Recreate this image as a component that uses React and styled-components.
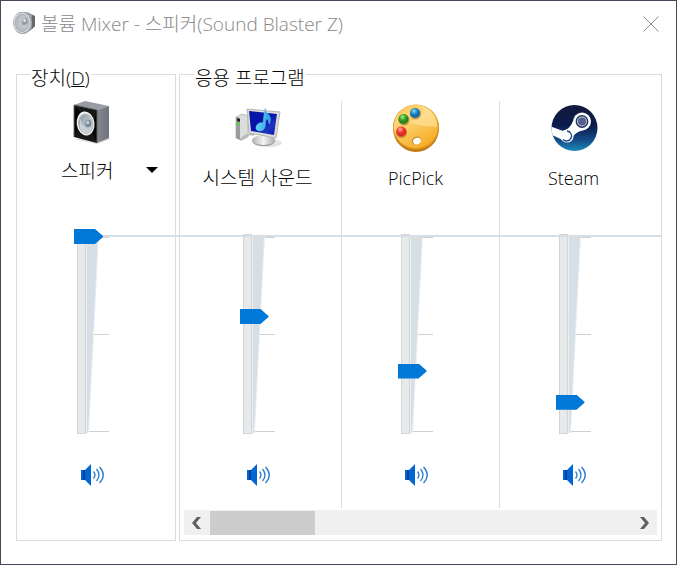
import React from 'react'
import styled, { createGlobalStyle } from 'styled-components'

const GlobalStyle = createGlobalStyle`
  * {
    box-sizing: border-box;
  }

  body {
    margin: 0;
    background: white;
    color: black;
    font-family: 'Open Sans', 'Noto Sans CJK KR', sans-serif;
    font-size: 18px;
    font-weight: 300;
  }
`

const Window = styled.main`
  display: flex;
  flex-direction: column;
  border: 1px solid #454a59;
  background: white;
`

const TitleBar = styled.header`
  display: flex;
  align-items: center;
  height: 46px;
  padding: 0 12px 0 11px;
`

const Title = styled.h1`
  flex: 1;
  margin: 0 0 0 4px;
  color: #888;
  font-size: 19px;
  font-weight: 300;
  line-height: 24px;
  white-space: nowrap;
`

const IconButton = styled.button`
  display: flex;
  align-items: center;
  justify-content: center;
  width: 26px;
  height: 24px;
  padding: 0;
  border: 0;
  background: transparent;
  cursor: pointer;
`

const Groups = styled.div`
  position: relative;
  display: flex;
  gap: 3px;
  padding: 12px 14px 23px 15px;
`

const Group = styled.fieldset`
  flex: ${props => (props.$fixed ? '0 0 160px' : '1 1 0')};
  min-width: 0;
  margin: 0;
  padding: ${props => (props.$fixed ? '0' : '0 4px 5px')};
  border: 1px solid #dcdcdc;
`

const Legend = styled.legend`
  margin-left: ${props => (props.$indent ? '10px' : '13px')};
  padding: 8px 1px 0;
  font-size: 19px;
  line-height: 22px;
`

const LevelLine = styled.div`
  position: absolute;
  top: 188px;
  left: 86px;
  right: 14px;
  height: 2px;
  background: #d6dfe6;
`

const Columns = styled.div`
  display: flex;
  margin: 12px 0 2px;
`

const Column = styled.div`
  flex: 1 1 0;
  display: flex;
  flex-direction: column;
  align-items: center;
  min-width: 0;
  padding: 0 ${props => (props.$master ? '8px' : '10px')} 22px 0;

  & + & {
    border-left: 1px solid #d6dfe6;
  }
`

const Head = styled.div`
  display: flex;
  flex-direction: column;
  align-items: center;
  gap: 14px;
  width: 100%;
  height: 128px;
  padding-top: ${props => (props.$top ? '0' : '3px')};
`

const Label = styled.label`
  font-size: ${props => (props.$latin ? '18px' : '19px')};
  line-height: 24px;
  white-space: nowrap;
`

const Picker = styled.div`
  position: relative;
  width: 100%;

  svg {
    position: absolute;
    top: 8px;
    right: 9px;
    pointer-events: none;
  }
`

const Select = styled.select`
  appearance: none;
  display: block;
  width: 100%;
  height: 24px;
  padding: 0 0 0 44px;
  border: 0;
  background: transparent;
  color: black;
  font-family: inherit;
  font-size: 19px;
  font-weight: 300;
  line-height: 24px;
`

const Fader = styled.div`
  position: relative;
  width: 36px;
  height: 210px;
`

const Scale = styled.svg`
  display: block;
`

const Range = styled.input`
  appearance: none;
  position: absolute;
  top: 0;
  left: 0;
  z-index: 1;
  width: 29px;
  height: 210px;
  margin: 0;
  background: transparent;
  writing-mode: vertical-lr;
  direction: rtl;
  cursor: pointer;

  &::-webkit-slider-runnable-track {
    width: 29px;
    background: transparent;
  }

  &::-webkit-slider-thumb {
    appearance: none;
    width: 29px;
    height: 15px;
    border: 0;
    background: #0078d7;
    clip-path: polygon(0 0, 21px 0, 29px 7px, 29px 8px, 21px 15px, 0 15px);
  }
`

const MuteButton = styled(IconButton)`
  height: 22px;
  margin: 25px 0 0 2px;
`

const ScrollBar = styled.div`
  display: flex;
  align-items: center;
  height: 25px;
  background: #f0f0f0;
`

const ScrollTrack = styled.div`
  flex: 1;
  height: 24px;
`

const ScrollThumb = styled.div`
  width: 25%;
  height: 24px;
  background: #cdcdcd;
`

const VolumeIcon = () => (
  <svg width="25" height="25" viewBox="0 0 25 25">
    <defs>
      <radialGradient id="cone" cx="0.6" cy="0.5">
        <stop offset="0" stopColor="#8c9399" />
        <stop offset="0.4" stopColor="#c2c9cf" />
        <stop offset="1" stopColor="#b4bac0" />
      </radialGradient>
    </defs>
    <g transform="translate(0 -2)">
      <path d="M12 1 19 4 23 6V16L19 20 12 24Z" fill="#8d8f92" />
      <path d="M20 5 23 6 23 16 20 19Z" fill="#66696c" />
      <path d="M18 5V19" stroke="#c4c7ca" />
      <ellipse cx="10.5" cy="12.8" rx="9.5" ry="11.2" fill="#9da1a4" />
      <ellipse cx="10" cy="12.8" rx="8.6" ry="10.2" fill="#dfe2e4" />
      <ellipse cx="10" cy="12.8" rx="7" ry="8.8" fill="url(#cone)" stroke="#a9aeb3" />
      <ellipse cx="13" cy="11.5" rx="2.5" ry="3.2" fill="#929aa1" />
      <ellipse cx="12.5" cy="10.5" rx="1.2" ry="1.7" fill="#e3e9ee" />
    </g>
  </svg>
)

const CloseIcon = () => (
  <svg width="16" height="16" viewBox="0 0 16 16">
    <path d="M.5.5 15.5 15.5M15.5.5.5 15.5" stroke="#8c8c8c" fill="none" />
  </svg>
)

const DeviceIcon = () => (
  <svg width="38" height="44" viewBox="0 0 38 44">
    <defs>
      <linearGradient id="boxSide" x1="0" x2="1">
        <stop offset="0" stopColor="#858890" />
        <stop offset="1" stopColor="#6f727b" />
      </linearGradient>
      <linearGradient id="coneFill" x1="0" y1="0" x2="1" y2="1">
        <stop offset="0" stopColor="#8d979e" />
        <stop offset="1" stopColor="#d4e0e7" />
      </linearGradient>
    </defs>
    <path d="M1 38 24 43 38 38 34 36Z" fill="#ddd" />
    <path d="M1 4 12 0 36 5 24 9Z" fill="#9a9ca3" />
    <path d="M24 9 36 5V37L24 42Z" fill="url(#boxSide)" />
    <path d="M1 4 24 9V42L1 36Z" fill="#171717" />
    <path d="M2 6 11 14 2 34ZM23 39 18 31 23 12Z" fill="#050505" />
    <path d="M1 36V4L24 9V42" fill="none" stroke="#58595c" strokeWidth="0.8" />
    <ellipse cx="12.6" cy="22.5" rx="8.9" ry="12" transform="rotate(-8 12.6 22.5)" fill="#f2f3f3" />
    <ellipse cx="12.8" cy="22.7" rx="7.2" ry="9.8" transform="rotate(-8 12.8 22.7)" fill="url(#coneFill)" stroke="#b5babd" />
    <path d="M7 17Q9 27 18 30Q12 35 7 27Z" fill="#c9d2d8" />
    <ellipse cx="15.3" cy="22.5" rx="3" ry="3.8" fill="#76858e" />
    <ellipse cx="14.8" cy="21.5" rx="1.6" ry="2" fill="#bccbd4" />
  </svg>
)

const ComputerIcon = () => (
  <svg width="48" height="48" viewBox="0 0 48 48">
    <defs>
      <linearGradient id="screen" x1="0" x2="1" y2="1">
        <stop offset="0" stopColor="#0718a2" />
        <stop offset="0.5" stopColor="#0713ad" />
        <stop offset="0.7" stopColor="#1c34c0" />
        <stop offset="1" stopColor="#0c1aa8" />
      </linearGradient>
      <linearGradient id="stand" x1="0" x2="1">
        <stop offset="0" stopColor="#b1b3b4" />
        <stop offset="0.5" stopColor="#f4f4f4" />
        <stop offset="1" stopColor="#a8aaab" />
      </linearGradient>
      <linearGradient id="note" x1="0" x2="1">
        <stop offset="0" stopColor="#64d2f8" />
        <stop offset="1" stopColor="#259fde" />
      </linearGradient>
    </defs>
    <ellipse cx="36" cy="39" rx="12" ry="4" fill="#e4e4e4" />
    <path d="M2 13 8 10 14 12V33L8 36 2 34Z" fill="#dcdddd" stroke="#b0b1b1" strokeWidth="0.8" />
    <path d="M2 13 6 14V36L2 34Z" fill="#9b9d9d" />
    <path d="M3 14 6 15V18L3 17Z" fill="#222" />
    <path d="M3 18 6 19V21L3 20Z" fill="#39e31c" />
    <path d="M6 36Q15 28 20 31" fill="none" stroke="#b6b6b6" strokeWidth="2" />
    <path d="M28 29 38 31 37 37H27Z" fill="#b6b8b9" />
    <ellipse cx="29.5" cy="37" rx="11.5" ry="5.2" fill="#9fa1a2" />
    <ellipse cx="29.5" cy="36.2" rx="11.5" ry="4.8" fill="url(#stand)" />
    <path d="M13 5 46 8 42 34 15 29Z" fill="#deddda" stroke="#b8b6b2" />
    <path d="M15 7 43 10 40 31 17 27Z" fill="url(#screen)" />
    <path d="M31 4C32 10 38 11 36 18L35 20C35 16 33 15 32 15L31 23C30 28 22 28 22 24C22 20 26 18 29 19Z" fill="url(#note)" stroke="#75d1f3" strokeWidth="0.5" />
  </svg>
)

const PaletteIcon = () => (
  <svg width="48" height="48" viewBox="0 0 48 48">
    <defs>
      <linearGradient id="wood" x1="0" y1="0" x2="0.6" y2="1">
        <stop offset="0" stopColor="#ffc65a" />
        <stop offset="0.4" stopColor="#ffd475" />
        <stop offset="1" stopColor="#f6ad28" />
      </linearGradient>
      <radialGradient id="red" cx="0.4" cy="0.3">
        <stop offset="0" stopColor="#ffaaa1" />
        <stop offset="0.6" stopColor="#f44239" />
        <stop offset="1" stopColor="#d92b24" />
      </radialGradient>
      <radialGradient id="green" cx="0.4" cy="0.3">
        <stop offset="0" stopColor="#b4eb91" />
        <stop offset="0.6" stopColor="#39a72b" />
        <stop offset="1" stopColor="#278319" />
      </radialGradient>
      <radialGradient id="blue" cx="0.4" cy="0.3">
        <stop offset="0" stopColor="#94ddf6" />
        <stop offset="0.6" stopColor="#238ac7" />
        <stop offset="1" stopColor="#126aa4" />
      </radialGradient>
    </defs>
    <ellipse cx="24" cy="24.5" rx="23" ry="23.5" fill="#c17a14" />
    <ellipse cx="24" cy="23" rx="23" ry="22.5" fill="#e39a22" />
    <ellipse cx="23.8" cy="22.4" rx="22" ry="21.6" fill="url(#wood)" />
    <path d="M17 18Q25 22 45 23Q44 5 27 1Q39 9 17 18Z" fill="#ffe39e" opacity="0.65" />
    <circle cx="23.5" cy="10" r="5.6" fill="#91651f" opacity="0.5" />
    <circle cx="12" cy="16" r="5.6" fill="#75651f" opacity="0.5" />
    <circle cx="9.5" cy="28.5" r="5.6" fill="#91521f" opacity="0.5" />
    <circle cx="23" cy="9" r="5" fill="url(#blue)" />
    <circle cx="11.5" cy="15" r="5" fill="url(#green)" />
    <circle cx="9.2" cy="27.5" r="5" fill="url(#red)" />
    <ellipse cx="24.5" cy="36.5" rx="4.7" ry="3.9" transform="rotate(-25 24.5 36.5)" fill="#c68223" />
    <ellipse cx="25" cy="37" rx="4" ry="3.3" transform="rotate(-25 25 37)" fill="white" />
  </svg>
)

const SteamIcon = () => (
  <svg width="48" height="48" viewBox="0 0 48 48">
    <defs>
      <linearGradient id="steamFill" x1="0" y1="0" x2="0" y2="1">
        <stop offset="0" stopColor="#121a3b" />
        <stop offset="0.45" stopColor="#0c1b4e" />
        <stop offset="0.75" stopColor="#134a83" />
        <stop offset="1" stopColor="#1c8abb" />
      </linearGradient>
      <clipPath id="steamClip">
        <circle cx="24.5" cy="24" r="23" />
      </clipPath>
    </defs>
    <circle cx="24.5" cy="24" r="23" fill="url(#steamFill)" />
    <g clipPath="url(#steamClip)">
      <path d="M0 22 13 27Q20 25 23 17L34 26Q25 28 22 34L17 38 0 30Z" fill="white" />
      <circle cx="17" cy="32" r="6.6" fill="white" />
      <circle cx="32" cy="17.5" r="9" fill="white" />
    </g>
    <circle cx="32" cy="17.5" r="5.7" fill="#c3cadb" stroke="#22335f" strokeWidth="1.4" />
    <circle cx="32" cy="17.5" r="4" fill="#53618a" />
    <path d="M13 35.5A5 5 0 1 0 17 27" fill="none" stroke="#17457d" strokeWidth="1.3" />
  </svg>
)

const MuteIcon = () => (
  <svg width="24" height="22" viewBox="0 0 24 22">
    <path d="M0 6H4L10 0V22L4 16H0Z" fill="#0066d4" />
    <path d="M2 6H4V16H2Z" fill="#003f96" />
    <path
      d="M12.5 7.5Q15.5 11 12.5 14.5M15.5 5Q20.5 11 15.5 17M18.5 3Q26 11 18.5 19"
      fill="none"
      stroke="#2a7bd0"
      strokeWidth="1.3"
    />
  </svg>
)

const Chevron = ({ d }) => (
  <svg width="10" height="12" viewBox="0 0 10 12">
    <path d={d} fill="#606060" />
  </svg>
)

const VolumeFader = ({ id, value }) => (
  <Fader>
    <Scale width="36" height="210" viewBox="0 0 36 210">
      <path d="M12 8.5H35M12 105.5H35M12 202.5H35" stroke="#d0d0d0" />
      <path d="M12 7H25L15 204H12Z" fill="#ebeff2" />
      <path d="M13 7H24L14 204H13Z" fill="#d6dfe6" />
      <rect x="3.5" y="5.5" width="8" height="199" fill="#e7eaea" stroke="#d3d5d5" />
    </Scale>
    <Range id={id} type="range" min="0" max="100" defaultValue={value} aria-label="볼륨" />
  </Fader>
)

const Mute = () => (
  <MuteButton type="button" aria-label="음소거">
    <MuteIcon />
  </MuteButton>
)

const apps = [
  { id: 'system', name: '시스템 사운드', Icon: ComputerIcon, volume: 59 },
  { id: 'picpick', name: 'PicPick', Icon: PaletteIcon, volume: 31, latin: true },
  { id: 'steam', name: 'Steam', Icon: SteamIcon, volume: 15, latin: true },
]

const App = () => (
  <>
    <GlobalStyle />
    <Window>
      <TitleBar>
        <VolumeIcon />
        <Title>볼륨 Mixer - 스피커(Sound Blaster Z)</Title>
        <IconButton type="button" aria-label="닫기">
          <CloseIcon />
        </IconButton>
      </TitleBar>

      <Groups>
        <Group $fixed>
          <Legend>
            <label htmlFor="device">장치(<u>D</u>)</label>
          </Legend>
          <Columns>
            <Column $master>
              <Head $top>
                <DeviceIcon />
                <Picker>
                  <Select id="device" defaultValue="speaker">
                    <option value="speaker">스피커</option>
                  </Select>
                  <svg width="12" height="6" viewBox="0 0 12 6">
                    <path d="M0 0H12L6 6Z" />
                  </svg>
                </Picker>
              </Head>
              <VolumeFader id="master" value={100} />
              <Mute />
            </Column>
          </Columns>
        </Group>

        <Group>
          <Legend $indent>응용 프로그램</Legend>
          <Columns>
            {apps.map(({ id, name, Icon, volume, latin }) => (
              <Column key={id}>
                <Head>
                  <Icon />
                  <Label htmlFor={id} $latin={latin}>{name}</Label>
                </Head>
                <VolumeFader id={id} value={volume} />
                <Mute />
              </Column>
            ))}
          </Columns>
          <ScrollBar>
            <IconButton type="button" aria-label="왼쪽으로">
              <Chevron d="M5 0H9L4 6 9 12H5L0 6Z" />
            </IconButton>
            <ScrollTrack>
              <ScrollThumb />
            </ScrollTrack>
            <IconButton type="button" aria-label="오른쪽으로">
              <Chevron d="M1 0H5L10 6 5 12H1L6 6Z" />
            </IconButton>
          </ScrollBar>
        </Group>
        <LevelLine />
      </Groups>
    </Window>
  </>
)

export default App
